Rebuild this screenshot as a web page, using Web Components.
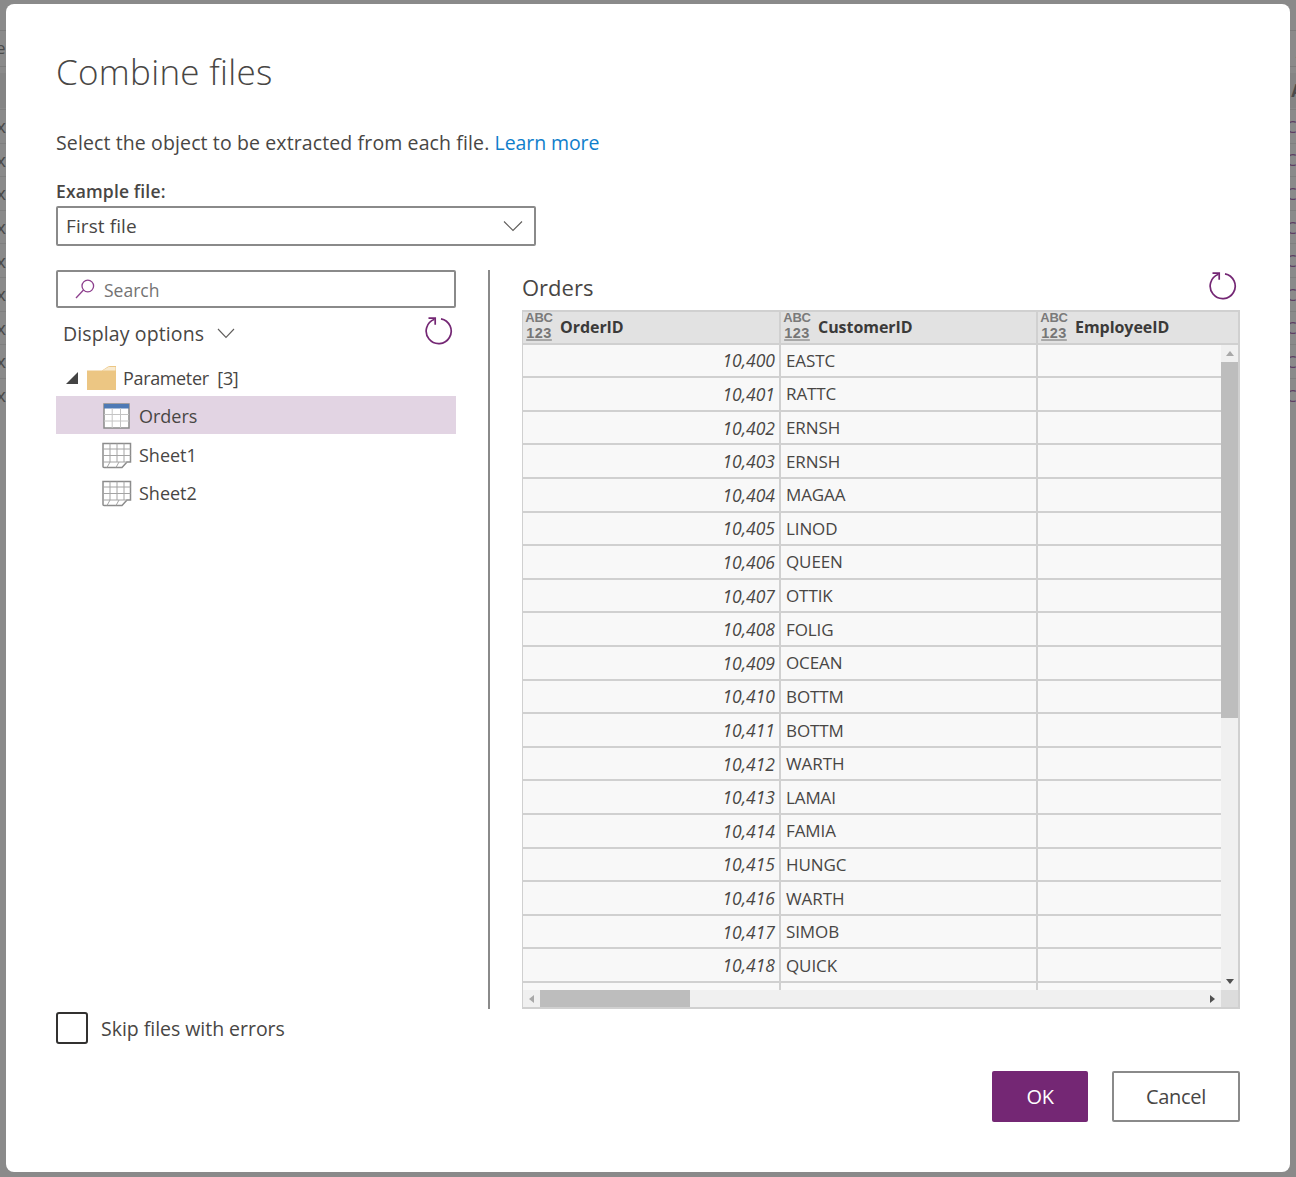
<!DOCTYPE html>
<html lang="en">
<head>
<meta charset="utf-8">
<title>Combine files</title>
<style>
html, body { margin: 0; height: 100%; background: #8a8a8a; }
body { font-family: "Open Sans", "Liberation Sans", sans-serif; color: #484644; overflow: hidden; }
</style>
</head>
<body>
<combine-dialog></combine-dialog>

<script>
const PURPLE = '#742774';

class RefreshIcon extends HTMLElement{
    constructor(){
        super();
        this.attachShadow({mode: 'open'});
        this.shadowRoot.innerHTML = `
        <style>:host{display:block;width:28px;height:28px} svg{display:block}</style>
        <svg width="28" height="28" viewBox="0 0 28 28" fill="none" stroke="${PURPLE}" stroke-width="1.7">
            <path d="M16 1.8A12.5 12.5 0 1 1 9.5 2.3"/>
            <path d="M3.5 1.2H10.2V7.8"/>
        </svg>`;
    }
}
customElements.define('refresh-icon', RefreshIcon);

class TreeItem extends HTMLElement{
    constructor(){
        super();
        this.attachShadow({mode: 'open'});
        this.shadowRoot.innerHTML = `
        <style>
        :host{display:flex;align-items:center;height:38px;font-size:18px;color:#484644}
        :host([selected]){background:#e2d4e3}
        .text{white-space:pre}
        </style>
        <slot name="icon"></slot><span class="text"><slot></slot></span>`;
    }
}
customElements.define('tree-item', TreeItem);

class TypeIcon extends HTMLElement{
    constructor(){
        super();
        this.attachShadow({mode: 'open'});
        this.shadowRoot.innerHTML = `
        <style>
        :host{display:block;width:28px;height:32px;margin-top:-3px;font-family:"Liberation Sans",sans-serif;color:#7a7a7a;font-weight:700;flex:none}
        div{text-align:center;white-space:nowrap}
        .a{font-size:13px;letter-spacing:-.2px}
        .n{font-size:14.5px;letter-spacing:.5px;color:#767676;text-decoration:underline #a8a8a8 1.5px;text-underline-offset:1px}
        </style>
        <div class="a">ABC</div><div class="n">123</div>`;
    }
}
customElements.define('type-icon', TypeIcon);

class DataGrid extends HTMLElement{
    constructor(){
        super();
        this.attachShadow({mode: 'open'});
        const rows = [
            ['10,400','EASTC'],['10,401','RATTC'],['10,402','ERNSH'],['10,403','ERNSH'],
            ['10,404','MAGAA'],['10,405','LINOD'],['10,406','QUEEN'],['10,407','OTTIK'],
            ['10,408','FOLIG'],['10,409','OCEAN'],['10,410','BOTTM'],['10,411','BOTTM'],
            ['10,412','WARTH'],['10,413','LAMAI'],['10,414','FAMIA'],['10,415','HUNGC'],
            ['10,416','WARTH'],['10,417','SIMOB'],['10,418','QUICK'],['','']
        ];
        const cols = ['OrderID','CustomerID','EmployeeID'];
        this.shadowRoot.innerHTML = `
        <style>
        :host{display:grid;box-sizing:border-box;height:699px;border:solid #d0d0d0;border-width:1px 2px 2px 1px;
            grid-template-columns:1fr 17px;grid-template-rows:34px 645px 17px;background:#f8f8f8;font-size:17px;color:#484644;letter-spacing:-.1px}
        .head{grid-column:1 / 3;display:grid;grid-template-columns:258px 257px 1fr;background:#e2e2e2;border-top:1px solid #d0d0d0;box-sizing:border-box;border-bottom:2px solid #d0d0d0;overflow:hidden}
        .head div.col{display:flex;align-items:center;gap:7px;padding-left:2px;border-right:2px solid #d0d0d0;font-weight:700;color:#3b3a39;font-size:16px;letter-spacing:-.05px}
        .head div.col:last-child{border-right:0}
        .head span{margin-top:-2px}
        .body{overflow:hidden}
        .row{display:grid;grid-template-columns:258px 257px 1fr;height:33.62px;box-sizing:border-box;border-bottom:2px solid #d0d0d0}
        .row:first-child{margin-top:-.5px}
        .row span{display:flex;align-items:center;border-right:2px solid #d0d0d0;box-sizing:border-box;padding:0 4px 0 5px}
        .row span:last-child{border-right:0}
        .row .num{justify-content:flex-end;font-style:italic;font-size:17.5px;letter-spacing:0}
        .vbar{background:#f0f0f0;display:grid;grid-template-rows:17px 356px 1fr 17px}
        .thumb{background:#bdbdbd}
        .hbar{background:#f0f0f0;display:grid;grid-template-columns:17px 150px 1fr 17px}
        .corner{background:#dcdcdc}
        .arrow{display:flex;align-items:center;justify-content:center}
        i{display:block;width:0;height:0;border:4px solid transparent}
        .up{border-top:0;border-bottom:5px solid #a8a8a8}
        .down{border-bottom:0;border-top:5px solid #505050}
        .left{border-left:0;border-right:5px solid #a8a8a8}
        .right{border-right:0;border-left:5px solid #505050}
        </style>
        <div class="head">${cols.map(c => `<div class="col"><type-icon></type-icon><span>${c}</span></div>`).join('')}</div>
        <div class="body">${rows.map(r => `<div class="row"><span class="num">${r[0]}</span><span>${r[1]}</span><span></span></div>`).join('')}</div>
        <div class="vbar"><div class="arrow"><i class="up"></i></div><div class="thumb"></div><div></div><div class="arrow"><i class="down"></i></div></div>
        <div class="hbar"><div class="arrow"><i class="left"></i></div><div class="thumb"></div><div></div><div class="arrow"><i class="right"></i></div></div>
        <div class="corner"></div>`;
    }
}
customElements.define('data-grid', DataGrid);

class PageBackdrop extends HTMLElement{
    constructor(){
        super();
        this.attachShadow({mode: 'open'});
        let left = '', right = '';
        for(let i = 0; i < 9; i++){
            left += '<div class="r"><span>x</span></div>';
            right += '<div class="r"><span class="c">C0</span></div>';
        }
        this.shadowRoot.innerHTML = `
        <style>
        :host{position:absolute;inset:0;overflow:hidden;background:#8a8a8a;font:19px "Open Sans",sans-serif;color:#4a4a4a}
        .side{position:absolute;top:109px;width:6px;overflow:hidden}
        .l{left:0}.rr{right:0}
        .r{height:33.6px;box-sizing:border-box;border-top:1px solid #7f7f7f;display:flex;align-items:center}
        .l .r{justify-content:flex-end}
        .c{color:#5e3f63;white-space:nowrap;margin-left:-4px;font-size:17px}
        .line{position:absolute;left:0;right:0;height:1px;background:#7c7c7c}
        .band{position:absolute;left:0;right:0;top:73px;height:35px;background:#848484}
        .bit{position:absolute;line-height:20px;font-size:17px}
        </style>
        <div class="line" style="top:30px"></div>
        <div class="line" style="top:66px"></div>
        <div class="band"></div>
        <span class="bit" style="left:-4px;top:38px">e</span>
        <span class="bit" style="right:-6px;top:42px;color:#6b4a4a">/</span>
        <span class="bit" style="right:-7px;top:81px;font-weight:700">A</span>
        <div class="side l">${left}</div>
        <div class="side rr">${right}</div>`;
    }
}
customElements.define('page-backdrop', PageBackdrop);

class CombineDialog extends HTMLElement{
    constructor(){
        super();
        this.attachShadow({mode: 'open'});
        const sheet = `<svg slot="icon" width="30" height="27" viewBox="0 0 30 27" fill="none" stroke="#8c8c8c" style="margin:0 7px 0 46px">
            <path d="M1 1.5H28.5V20H25L20 25.5H2A1 1 0 0 1 1 24.5Z" fill="#fff" stroke-width="1.5"/>
            <path d="M1 7H28.5M1 13.500H28.5M8 1.500V20M15 1.500V20M22 1.500V20M1 20H25M8 20L5 25.500M17 20L14 25.500" stroke="#a4a4a4" stroke-width="1"/>
        </svg>`;
        this.shadowRoot.innerHTML = `
        <style>
        :host{display:block;box-sizing:border-box;height:100%;padding:4px 6px 5px;position:relative}
        .dialog{position:relative;background:#fff;border-radius:8px;height:1168px;box-sizing:border-box;padding:44px 50px 0}
        h1{margin:0;font-weight:300;font-size:35px;height:48px;line-height:48px;color:#484644;letter-spacing:.3px}
        .desc{margin-top:31px;height:32px;line-height:32px;font-size:19.5px;letter-spacing:.12px;color:#484644}
        a{color:#0f7ecb;text-decoration:none;letter-spacing:-.1px}
        .label{margin-top:20px;height:24px;line-height:24px;font-size:17.5px;font-weight:600;letter-spacing:.15px;color:#484644}
        .select{margin-top:3px;width:480px;height:40px;box-sizing:border-box;border:2px solid #8a8a8a;border-radius:2px;display:flex;align-items:center;justify-content:space-between;padding:0 11px 0 8px;font-size:19px;letter-spacing:.1px}
        .main{margin-top:24px;height:738px;display:grid;grid-template-columns:400px 1fr 718px}
        .divider{width:2px;background:#8a8a8a;margin-left:32px}
        .search{height:38px;box-sizing:border-box;border:2px solid #8a8a8a;border-radius:2px;display:flex;align-items:center;padding-left:17px;gap:9px;font-size:17.5px;color:#737373}
        .search span{margin-top:2px}
        .display{height:51px;display:flex;align-items:center;padding:0 3px 0 7px;font-size:19.5px;letter-spacing:.12px}
        .display span{margin-right:13px}
        .display refresh-icon{margin-left:auto;margin-top:-6px}
        .tri{width:0;height:0;border-style:solid;border-width:0 0 12px 12px;border-color:transparent transparent #444 transparent;margin:0 9px 0 10px}
        .right-head{height:40px;display:flex;align-items:center;justify-content:space-between;padding-right:3px}
        .right-head span{font-size:22px;margin-top:-6px}
        .right-head refresh-icon{margin-top:-9px}
        .footer{margin-top:4px;height:32px;display:flex;align-items:center;gap:13px;font-size:19.5px;letter-spacing:-.03px}
        .check{width:32px;height:32px;box-sizing:border-box;border:2px solid #323130;border-radius:3px}
        .buttons{margin-top:27px;display:flex;justify-content:flex-end;gap:24px}
        button{height:51px;box-sizing:border-box;border-radius:2px;font:inherit;font-size:20px;letter-spacing:-.3px;padding:0}
        .ok{width:96px;background:${PURPLE};border:0;color:#fff}
        .cancel{width:128px;background:#fff;border:2px solid #8a8a8a;color:#484644}
        </style>
        <page-backdrop></page-backdrop>
        <div class="dialog">
            <h1>Combine files</h1>
            <div class="desc">Select the object to be extracted from each file. <a href="#">Learn more</a></div>
            <div class="label">Example file:</div>
            <div class="select"><span>First file</span>
                <svg width="20" height="12" viewBox="0 0 20 12" fill="none" stroke="#605e5c" stroke-width="1.1"><path d="M1 1.500L10 10.500L19 1.500"/></svg>
            </div>
            <div class="main">
                <div>
                    <div class="search">
                        <svg width="20" height="20" viewBox="0 0 20 20" fill="none" stroke="#8d3f8d" stroke-width="1.3"><circle cx="12.800" cy="7" r="5.800"/><path d="M8.500 11L1 19"/></svg>
                        <span>Search</span>
                    </div>
                    <div class="display"><span>Display options</span>
                        <svg width="18" height="11" viewBox="0 0 18 11" fill="none" stroke="#605e5c" stroke-width="1.1"><path d="M1 1L9 9.500L17 1"/></svg>
                        <refresh-icon></refresh-icon>
                    </div>
                    <div class="tree">
                        <tree-item style="height:37px;letter-spacing:-.35px"><i class="tri" slot="icon"></i><svg slot="icon" width="30" height="26" viewBox="0 0 30 26" style="margin:1px 6px 0 0"><path d="M0 5.500H15L21 1.500Q22 1 23 1H29V25H0Z" fill="#ecc683"/><path d="M15.500 5.500L21.500 2H28.500V5.500Z" fill="#f8ead0"/></svg>Parameter  [3]</tree-item>
                        <tree-item selected style="padding-top:2px;box-sizing:border-box"><svg slot="icon" width="27" height="26" viewBox="0 0 27 26" fill="none" style="margin:-1px 9px 0 47px">
                                <rect x="1" y="1" width="25" height="24" fill="#fff" stroke="#8a8a8a" stroke-width="1.500"/>
                                <rect x="1" y="1" width="25" height="4.500" fill="#4e7ab5"/>
                                <path d="M1 11.500H26M1 18H26M9.200 5V25M17.500 5V25" stroke="#c4c4c4"/>
                            </svg>Orders</tree-item>
                        <tree-item style="margin-top:2px">${sheet}Sheet1</tree-item>
                        <tree-item>${sheet}Sheet2</tree-item>
                    </div>
                </div>
                <div class="divider"></div>
                <div>
                    <div class="right-head"><span>Orders</span><refresh-icon></refresh-icon></div>
                    <data-grid></data-grid>
                </div>
            </div>
            <div class="footer"><div class="check"></div><span>Skip files with errors</span></div>
            <div class="buttons"><button class="ok">OK</button><button class="cancel">Cancel</button></div>
        </div>`;
    }
}
customElements.define('combine-dialog', CombineDialog);
</script>
</body>
</html>
